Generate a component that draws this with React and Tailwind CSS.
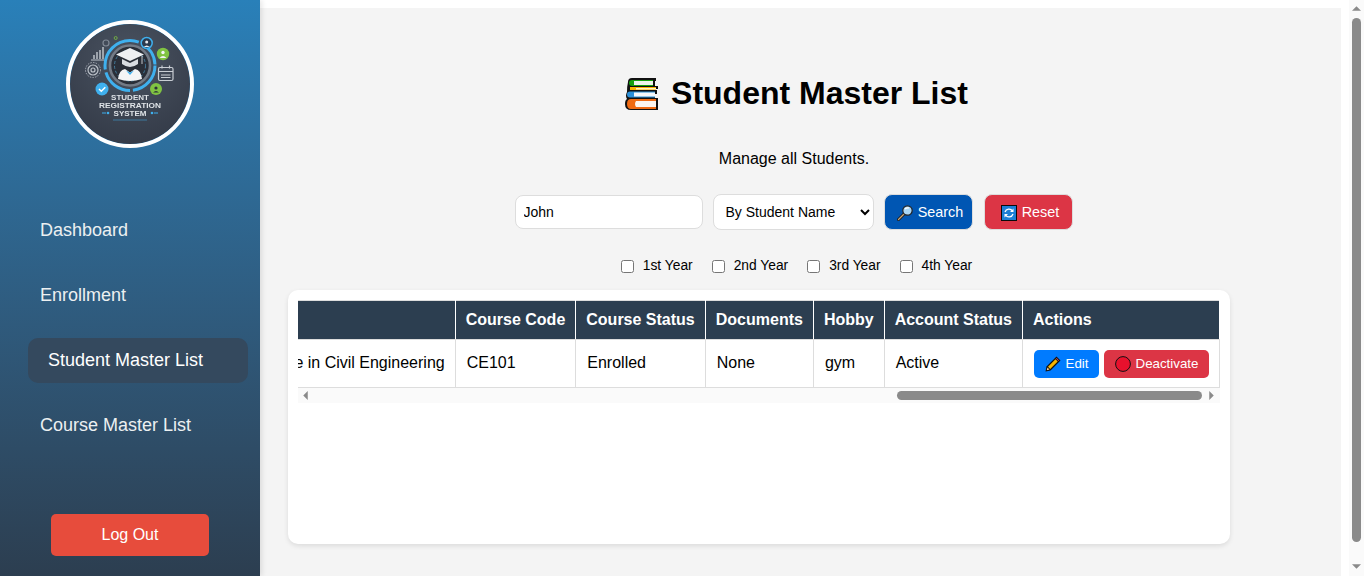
const FONT = "font-['Liberation_Sans',Arial,sans-serif]";

function Logo() {
  return (
    <svg viewBox="0 0 120 120" className="block h-full w-full rounded-full blur-[0.3px]">
      <defs>
        <radialGradient id="lg" cx="50%" cy="30%" r="75%">
          <stop offset="0" stopColor="#4a5361" />
          <stop offset="1" stopColor="#333a47" />
        </radialGradient>
      </defs>
      <rect width="120" height="120" fill="url(#lg)" />
      <circle cx="60" cy="41.500" r="25" fill="none" stroke="#3fb0ee" strokeWidth="3" strokeDasharray="36 3 32 3 52 3 26 3" />
      <circle cx="60" cy="41.500" r="20" fill="#2a2f38" stroke="#737b86" strokeWidth="2.600" />
      <circle cx="60" cy="41.500" r="15.500" fill="none" stroke="#4a8fb5" strokeWidth="0.800" strokeDasharray="3 2" />
      <path d="M60 24 L74 30.500 L60 37 L46 30.500 Z" fill="#eef0f2" />
      <path d="M52 35 v5 q8 6 16 0 v-5 l-8 4 Z" fill="#d9dde1" />
      <path d="M48 55 q1 -9 7 -10 l5 3.500 l5 -3.500 q6 1 7 10 q-12 4 -24 0 Z" fill="#f4f5f6" />
      <path d="M56 46.500 l4 4.500 l4 -4.500 l-4 2 Z" fill="#3fb0ee" />
      <path d="M72 32 v8" stroke="#e8ebee" strokeWidth="0.800" />
      <g stroke="#bcc2c9" strokeWidth="1.200" fill="none">
        <path d="M21 36 h13" />
        <path d="M24 35 v-4 M27 35 v-7 M30 35 v-9 M33 35 v-12" strokeWidth="1.500" />
        <circle cx="36" cy="19" r="3" stroke="#818995" />
        <circle cx="23" cy="46" r="5" />
        <circle cx="23" cy="46" r="2" />
        <circle cx="23" cy="46" r="7.500" strokeDasharray="1.500 1.200" strokeWidth="0.800" />
      </g>
      <circle cx="45.700" cy="14" r="1.500" fill="none" stroke="#7cc142" strokeWidth="0.800" />
      <circle cx="76.700" cy="19" r="5.500" fill="#2b3a4d" stroke="#3fb0ee" strokeWidth="1.500" />
      <circle cx="76.700" cy="18" r="1.500" fill="#e8ebee" />
      <path d="M73.700 23 q3 -3 6 0 Z" fill="#e8ebee" />
      <circle cx="93" cy="30" r="6.200" fill="#80c342" />
      <circle cx="93" cy="28.500" r="1.700" fill="#f2f4f5" />
      <path d="M89.500 34 q3.500 -4 7 0 Z" fill="#f2f4f5" />
      <circle cx="86" cy="65" r="6" fill="#80c342" />
      <circle cx="86" cy="64" r="1.600" fill="#2b303a" />
      <path d="M83 68.500 q3 -3 6 0 Z" fill="#2b303a" />
      <g fill="none" stroke="#c9ced4" strokeWidth="1.200">
        <rect x="88.500" y="43.500" width="14.500" height="13" rx="1.500" />
        <path d="M88.500 47.500 h14.500 M92 41.500 v3 M99.500 41.500 v3 M91 51 h9.500 M91 53.500 h9.500" />
      </g>
      <circle cx="32" cy="65" r="6.500" fill="#3fb0ee" />
      <path d="M29 65 l2.300 2.300 l4 -4" fill="none" stroke="#fff" strokeWidth="1.500" />
      <g fontFamily="'Liberation Sans',Arial,sans-serif" fontWeight="700" fill="#dfe3e7" textAnchor="middle">
        <text x="60" y="76" fontSize="8">STUDENT</text>
        <text x="60" y="84" fontSize="8" textLength="62" lengthAdjust="spacingAndGlyphs">REGISTRATION</text>
        <text x="60" y="92" fontSize="8">SYSTEM</text>
      </g>
      <g fill="#3fb0ee">
        <circle cx="38" cy="89" r="1.300" />
        <circle cx="82" cy="89" r="1.300" />
        <rect x="32" y="88.500" width="4" height="1" />
        <rect x="84" y="88.500" width="4" height="1" />
        <rect x="43" y="95.500" width="34" height="1" opacity="0.5" />
      </g>
    </svg>
  );
}

function BooksIcon() {
  return (
    <svg viewBox="0 0 34 34" className="h-[34px] w-[34px] shrink-0">
      <path d="M3 5 Q3 1 7 1 H31 V4 H30 V9 H33 V12 H31 V13 H32 V17 H30 V21 H33 V33 H6 Q0 33 0 27 Q0 23 2 22 Q0 19 2 15 Q2 9 3 5 Z" fill="#111" />
      <path d="M4 6 Q4 3 7 3 H28 V9 H7 Q4 9 4 6 Z" fill="#16a00e" />
      <path d="M9 4 H28 V8 H9 Z" fill="#eef4ea" />
      <path d="M5 10 H31 V13 H5 Z" fill="#f9b500" />
      <path d="M11 11 H31 V12.500 H11 Z" fill="#fff3cc" />
      <path d="M2 17.500 Q2 14.500 5 14.500 H30 V20.500 H5 Q2 20.500 2 17.500 Z" fill="#2b8fd8" />
      <path d="M9 15.500 H30 V19.500 H9 Z" fill="#f5f8fb" />
      <path d="M2 27 Q2 22 6 22 H31 V32 H6 Q2 32 2 27 Z" fill="#ef6a12" />
      <path d="M11 24 H31 V30 H11 Q9 27 11 24 Z" fill="#fbf5ef" />
    </svg>
  );
}

function SearchIcon() {
  return (
    <svg viewBox="0 0 16 16" className="h-4 w-4 shrink-0">
      <path d="M1.500 14.500 L7 9" stroke="#1a1a1a" strokeWidth="3" strokeLinecap="round" />
      <path d="M1.500 14.500 L7 9" stroke="#c7a77c" strokeWidth="1.300" strokeLinecap="round" />
      <circle cx="10.500" cy="5.500" r="4.700" fill="#a9d6f5" stroke="#222" strokeWidth="1.200" />
      <path d="M8 4 Q9.500 2.500 12 3" fill="none" stroke="#fff" strokeWidth="1.200" />
    </svg>
  );
}

function RefreshIcon() {
  return (
    <svg viewBox="0 0 16 16" className="h-4 w-4 shrink-0">
      <rect x="0.500" y="0.500" width="15" height="15" fill="#1b7fd6" stroke="#0a0a0a" />
      <path d="M4 7 A4.200 4.200 0 0 1 11.500 6" fill="none" stroke="#fff" strokeWidth="1.300" />
      <path d="M12 9 A4.200 4.200 0 0 1 4.500 10" fill="none" stroke="#fff" strokeWidth="1.300" />
      <path d="M12.500 3.500 V7 H9 Z M3.500 12.500 V9 H7 Z" fill="#fff" />
    </svg>
  );
}

function PencilIcon() {
  return (
    <svg viewBox="0 0 16 16" className="h-4 w-4 shrink-0">
      <path d="M0.500 15.500 L1.500 10.500 L11.500 0.500 L15.500 4.500 L5.500 14.500 Z" fill="#111" />
      <path d="M3 10.800 L10.500 3.300 L12.700 5.500 L5.200 12.900 Z" fill="#f7b500" />
      <path d="M11 2.500 L11.600 2 L14 4.400 L13.400 5 Z" fill="#e8536a" />
      <path d="M1.800 14.200 L2.400 11.500 L4.500 13.600 Z" fill="#f3d3a8" />
    </svg>
  );
}

function RedCircle() {
  return (
    <svg viewBox="0 0 16 16" className="h-4 w-4 shrink-0">
      <circle cx="8" cy="8" r="7.400" fill="#e8112d" stroke="#111" strokeWidth="1" />
    </svg>
  );
}

function Triangle({ dir, className }) {
  const points = { up: "0,5 5,0 10,5", down: "0,0 10,0 5,5", left: "5,0 5,10 0,5", right: "0,0 0,10 5,5" }[dir];
  const horizontal = dir === "up" || dir === "down";
  return (
    <svg viewBox={horizontal ? "0 0 10 5" : "0 0 5 10"} className={className}>
      <polygon points={points} fill="#8a8a8a" />
    </svg>
  );
}

function NavItem({ children, active }) {
  return (
    <a
      className={
        active
          ? "flex h-[45px] translate-x-2 items-center rounded-[10px] bg-[#34495e] px-5 pb-0.5 text-lg text-white"
          : "flex h-[45px] items-center rounded-[10px] px-5 pb-0.5 text-lg text-[#ecf0f1]"
      }
    >
      {children}
    </a>
  );
}

function Year({ label }) {
  return (
    <label className="flex items-center gap-[9px] text-[13.8px] leading-4 text-black">
      <input type="checkbox" className="m-0 h-[13px] w-[13px]" />
      {label}
    </label>
  );
}

const th = "whitespace-nowrap border border-[#dddddd] bg-[#2c3e50] px-2.5 py-2.5 text-left text-base leading-[18px] font-bold text-white [border-left-color:#ffffff] [border-right-color:#ffffff]";
const td = "whitespace-nowrap border border-[#dddddd] pb-3 pl-[11px] pr-2.5 pt-2.5 text-left text-base leading-[18px] text-black";

export default function App() {
  return (
    <div className={`${FONT} flex h-[576px] w-[1364px] overflow-hidden bg-white`}>
      <aside className="z-10 flex h-full w-[260px] shrink-0 flex-col items-stretch bg-gradient-to-b from-[#2980b9] to-[#2c3e50] px-5 pb-5 pt-5 shadow-[2px_0_5px_rgba(0,0,0,0.1)]">
        <div className="mx-auto h-32 w-32 overflow-hidden rounded-full border-4 border-white">
          <Logo />
        </div>
        <nav className="mt-[60px] flex flex-col gap-5">
          <NavItem>Dashboard</NavItem>
          <NavItem>Enrollment</NavItem>
          <NavItem active>Student Master List</NavItem>
          <NavItem>Course Master List</NavItem>
        </nav>
        <button className="mx-auto mt-auto h-[42px] w-[158px] rounded-[5px] bg-[#e74c3c] text-base text-white">
          Log Out
        </button>
      </aside>

      <div className="mt-2 w-[1081px] shrink-0 bg-[#f4f4f4] pl-7 pr-[41px] pt-[67px]">
        <h1 className="m-0 flex items-center justify-center gap-3 pl-[5px] text-[32px] font-bold leading-[37px] text-black">
          <BooksIcon />
          Student Master List
        </h1>
        <p className="mt-[38px] text-center text-base leading-[18px] text-black">Manage all Students.</p>

        <div className="mt-[26px] flex items-center justify-center gap-2.5 pr-px">
          <input
            readOnly
            value="John"
            className="h-[34px] w-[188px] rounded-lg border border-[#dddddd] bg-white px-2 text-[14px] text-black outline-none"
          />
          <select className="h-9 w-[161px] rounded-lg border border-[#dddddd] bg-white px-2 text-[14px] text-black outline-none">
            <option>By Student Name</option>
          </select>
          <button className="flex h-9 w-[89px] items-center justify-center gap-[5px] rounded-lg border border-[#dddddd] bg-[#0056b3] pl-1 pt-0.5 text-[14.4px] text-white">
            <SearchIcon />
            Search
          </button>
          <button className="ml-px flex h-9 w-[89px] items-center justify-center gap-[5px] rounded-lg border border-[#dddddd] bg-[#dc3545] pl-1 pt-0.5 text-[14.4px] text-white">
            <RefreshIcon />
            Reset
          </button>
        </div>

        <div className="mt-7 flex items-center justify-center gap-[19px] pl-[5px]">
          <Year label="1st Year" />
          <Year label="2nd Year" />
          <Year label="3rd Year" />
          <Year label="4th Year" />
        </div>

        <div className="mt-4 h-[254px] w-[942px] rounded-[10px] bg-white p-2.5 shadow-[0_2px_5px_rgba(0,0,0,0.1)]">
          <div className="flex justify-end overflow-hidden">
            <table className="shrink-0 border-collapse bg-white">
              <thead>
                <tr>
                  <th className={th}>Course</th>
                  <th className={th}>Course Code</th>
                  <th className={th}>Course Status</th>
                  <th className={th}>Documents</th>
                  <th className={th}>Hobby</th>
                  <th className={th}>Account Status</th>
                  <th className={th}>Actions</th>
                </tr>
              </thead>
              <tbody>
                <tr>
                  <td className="whitespace-nowrap border border-[#dddddd] px-2.5 pb-3 pt-2.5 text-left text-base leading-[18px] text-black">Bachelor of Science in Civil Engineering</td>
                  <td className={td}>CE101</td>
                  <td className={td}>Enrolled</td>
                  <td className={td}>None</td>
                  <td className={td}>gym</td>
                  <td className={td}>Active</td>
                  <td className="whitespace-nowrap border border-[#dddddd] pb-[9px] pl-[11px] pr-2.5 pt-2.5 text-left text-base leading-[18px] text-black">
                    <div className="flex items-center gap-[5px]">
                      <button className="flex h-7 w-[65px] items-center justify-center gap-[5px] rounded-[5px] bg-[#007bff] text-[13.33px] text-white">
                        <PencilIcon />
                        Edit
                      </button>
                      <button className="flex h-7 w-[105px] items-center justify-center gap-[5px] rounded-[5px] bg-[#dc3545] text-[13.33px] text-white">
                        <RedCircle />
                        Deactivate
                      </button>
                    </div>
                  </td>
                </tr>
              </tbody>
            </table>
          </div>
          <div className="relative h-[15px] w-full bg-[#fafafa]">
            <Triangle dir="left" className="absolute left-[5px] top-[3px] h-[9px] w-[5px]" />
            <div className="absolute left-[599px] top-[3px] h-[9px] w-[305px] rounded-full bg-[#8a8a8a]" />
            <Triangle dir="right" className="absolute right-[6px] top-[3px] h-[9px] w-[5px]" />
          </div>
        </div>
      </div>

      <div className="relative ml-2 h-full w-[15px] shrink-0 bg-[#fafafa]">
        <Triangle dir="up" className="absolute left-[3px] top-[6px] h-[5px] w-[9px]" />
        <div className="absolute left-[3px] top-[18px] h-[524px] w-[9px] rounded-full bg-[#8a8a8a]" />
        <Triangle dir="down" className="absolute bottom-[7px] left-[3px] h-[5px] w-[9px]" />
      </div>
    </div>
  );
}
